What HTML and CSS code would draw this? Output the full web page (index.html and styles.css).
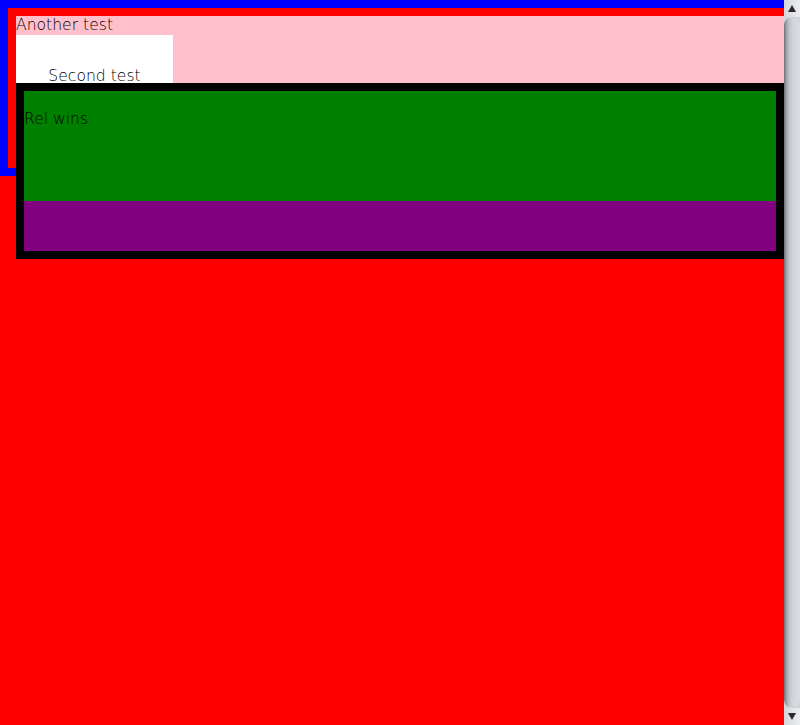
FILE: index.html
```html
<!DOCTYPE html>
<html>
<head>
<meta charset="utf-8">
<link rel="stylesheet" href="styles.css">
</head>
<body>
<div class="page">
  <div class="main">
    <div class="outer">
      <div class="pink">
        <div class="line">Another test</div>
        <div class="white"><div class="line">Second test</div></div>
      </div>
    </div>
    <div class="frame">
      <div class="green"><div class="line">Rel wins</div></div>
      <div class="purple"></div>
    </div>
  </div>
  <div class="scrollbar">
    <div class="sb-btn"><span class="arrow-up"></span></div>
    <div class="sb-track"><div class="sb-thumb"></div></div>
    <div class="sb-btn"><span class="arrow-down"></span></div>
  </div>
</div>
</body>
</html>
```
FILE: styles.css
```css
html, body {
  margin: 0;
  padding: 0;
  background: #ff0000;
}
body {
  font-family: "DejaVu Sans ExtraLight", "DejaVu Sans", sans-serif;
  font-weight: 200;
  font-size: 15.6px;
  color: #000;
}
.page {
  display: flex;
  width: 800px;
  height: 725px;
  overflow: hidden;
}
.main {
  width: 784px;
  flex: 0 0 784px;
  background: #ff0000;
}
.line {
  line-height: 19px;
  white-space: nowrap;
}
.outer {
  box-sizing: border-box;
  height: 176px;
  border: 8px solid #0000ff;
  border-right: 0;
  padding: 8px 0 8px 8px;
}
.pink {
  height: 144px;
  background: #ffc0cb;
  overflow: hidden;
}
.white {
  width: 157px;
  height: 120px;
  background: #ffffff;
  padding-top: 32px;
  box-sizing: border-box;
  text-align: center;
}
.frame {
  position: relative;
  margin-top: -93px;
  margin-left: 16px;
  border: 8px solid #000;
  height: 160px;
}
.green {
  height: 110px;
  box-sizing: border-box;
  padding-top: 19px;
  background: #008000;
}
.purple {
  height: 50px;
  background: #800080;
}
.scrollbar {
  width: 16px;
  flex: 0 0 16px;
  display: flex;
  flex-direction: column;
  background: #d9dce0;
}
.sb-btn {
  height: 17px;
  flex: 0 0 17px;
  display: flex;
  align-items: center;
  justify-content: center;
  background: linear-gradient(to right, #d4d6da, #eceef0);
}
.arrow-up {
  width: 0;
  height: 0;
  border-left: 4px solid transparent;
  border-right: 4px solid transparent;
  border-bottom: 7px solid #2a2a2a;
}
.arrow-down {
  width: 0;
  height: 0;
  border-left: 4px solid transparent;
  border-right: 4px solid transparent;
  border-top: 7px solid #2a2a2a;
}
.sb-track {
  flex: 1;
  display: flex;
  padding: 1px 0;
  background: #cfd2d6;
}
.sb-thumb {
  flex: 1;
  border-radius: 6px 6px 6px 6px / 8px 8px 8px 8px;
  background: linear-gradient(to right, #6e6e6e 0, #9a9ca0 2px, #bfc2c7 5px, #d2d5da 9px, #dadde1 100%);
}
```
